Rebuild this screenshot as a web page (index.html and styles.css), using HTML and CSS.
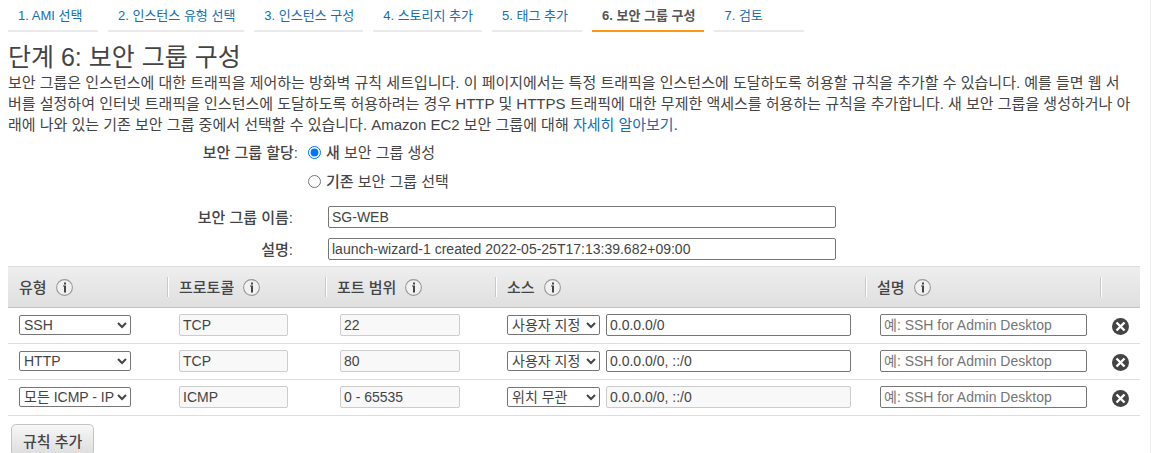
FILE: index.html
```html
<!DOCTYPE html>
<html lang="ko">
<head>
  <meta charset="UTF-8">
  <meta name="viewport" content="width=device-width, initial-scale=1.0">
  <title>단계 6: 보안 그룹 구성</title>
  <link rel="stylesheet" href="styles.css">
</head>
<body>
  <!-- Shared icons -->
  <svg class="sprite" aria-hidden="true">
    <symbol id="icon-info" viewBox="0 0 17 17">
      <circle cx="8.5" cy="8.5" r="7.9" fill="#f1f1f1" stroke="#999" stroke-width="1.1"/>
      <path d="M7 6.5h3v7H8v-6H7zM8 3.5h2v2H8z" fill="#444"/>
    </symbol>
    <symbol id="icon-remove" viewBox="0 0 17 17">
      <circle cx="8.5" cy="8.5" r="8.5" fill="#444"/>
      <path d="M4.5 4.5l8 8M12.5 4.5l-8 8" stroke="#fff" stroke-width="2.4"/>
    </symbol>
  </svg>

  <div class="wizard">
    <nav class="steps">
      <a href="#" class="step">1. AMI 선택</a>
      <a href="#" class="step">2. 인스턴스 유형 선택</a>
      <a href="#" class="step">3. 인스턴스 구성</a>
      <a href="#" class="step">4. 스토리지 추가</a>
      <a href="#" class="step">5. 태그 추가</a>
      <a href="#" class="step active">6. 보안 그룹 구성</a>
      <a href="#" class="step">7. 검토</a>
    </nav>

    <h1>단계 6: 보안 그룹 구성</h1>
    <p class="intro">보안 그룹은 인스턴스에 대한 트래픽을 제어하는 방화벽 규칙 세트입니다. 이 페이지에서는 특정 트래픽을 인스턴스에 도달하도록 허용할 규칙을 추가할 수 있습니다. 예를 들면 웹 서<br>버를 설정하여 인터넷 트래픽을 인스턴스에 도달하도록 허용하려는 경우 HTTP 및 HTTPS 트래픽에 대한 무제한 액세스를 허용하는 규칙을 추가합니다. 새 보안 그룹을 생성하거나 아<br>래에 나와 있는 기존 보안 그룹 중에서 선택할 수 있습니다. Amazon EC2 보안 그룹에 대해 <a href="#">자세히 알아보기</a>.</p>

    <!-- Security group details -->
    <div class="assign" role="radiogroup" aria-labelledby="assign-label">
      <span class="assign-label" id="assign-label">보안 그룹 할당:</span>
      <div class="choices">
        <label class="choice"><input type="radio" name="assign" checked><span><b>새</b> 보안 그룹 생성</span></label>
        <label class="choice"><input type="radio" name="assign"><span><b>기존</b> 보안 그룹 선택</span></label>
      </div>
    </div>
    <div class="field">
      <label for="group-name">보안 그룹 이름:</label>
      <input type="text" id="group-name" value="SG-WEB">
    </div>
    <div class="field">
      <label for="group-desc">설명:</label>
      <input type="text" id="group-desc" value="launch-wizard-1 created 2022-05-25T17:13:39.682+09:00">
    </div>

    <!-- Rules -->
    <table class="rules">
      <thead>
        <tr>
          <th class="col-type"><div class="head">유형 <svg class="icon"><use href="#icon-info"/></svg></div></th>
          <th class="col-protocol"><div class="head">프로토콜 <svg class="icon"><use href="#icon-info"/></svg></div></th>
          <th class="col-port"><div class="head">포트 범위 <svg class="icon"><use href="#icon-info"/></svg></div></th>
          <th class="col-source"><div class="head">소스 <svg class="icon"><use href="#icon-info"/></svg></div></th>
          <th class="col-desc"><div class="head">설명 <svg class="icon"><use href="#icon-info"/></svg></div></th>
          <th class="col-remove"><div class="head"></div></th>
        </tr>
      </thead>
      <tbody>
        <tr>
          <td><select class="type" aria-label="유형"><option>SSH</option></select></td>
          <td><input type="text" class="protocol" aria-label="프로토콜" value="TCP" disabled></td>
          <td class="inset"><input type="text" class="port" aria-label="포트 범위" value="22" disabled></td>
          <td><div class="source"><select aria-label="소스"><option>사용자 지정</option></select><input type="text" aria-label="소스 주소" value="0.0.0.0/0"></div></td>
          <td class="inset"><input type="text" class="desc" aria-label="설명" placeholder="예: SSH for Admin Desktop"></td>
          <td><button type="button" class="remove" aria-label="삭제"><svg class="icon"><use href="#icon-remove"/></svg></button></td>
        </tr>
        <tr>
          <td><select class="type" aria-label="유형"><option>HTTP</option></select></td>
          <td><input type="text" class="protocol" aria-label="프로토콜" value="TCP" disabled></td>
          <td class="inset"><input type="text" class="port" aria-label="포트 범위" value="80" disabled></td>
          <td><div class="source"><select aria-label="소스"><option>사용자 지정</option></select><input type="text" aria-label="소스 주소" value="0.0.0.0/0, ::/0"></div></td>
          <td class="inset"><input type="text" class="desc" aria-label="설명" placeholder="예: SSH for Admin Desktop"></td>
          <td><button type="button" class="remove" aria-label="삭제"><svg class="icon"><use href="#icon-remove"/></svg></button></td>
        </tr>
        <tr>
          <td><select class="type" aria-label="유형"><option>모든 ICMP - IPv4</option></select></td>
          <td><input type="text" class="protocol" aria-label="프로토콜" value="ICMP" disabled></td>
          <td class="inset"><input type="text" class="port" aria-label="포트 범위" value="0 - 65535" disabled></td>
          <td><div class="source"><select aria-label="소스"><option>위치 무관</option></select><input type="text" aria-label="소스 주소" value="0.0.0.0/0, ::/0" disabled></div></td>
          <td class="inset"><input type="text" class="desc" aria-label="설명" placeholder="예: SSH for Admin Desktop"></td>
          <td><button type="button" class="remove" aria-label="삭제"><svg class="icon"><use href="#icon-remove"/></svg></button></td>
        </tr>
      </tbody>
    </table>

    <button type="button" class="add-rule">규칙 추가</button>
  </div>
</body>
</html>
```
FILE: styles.css
```css
:root {
  --fg: #444;
  --link: #146eb4;
  --accent: #ff9914;
  --line: #ddd;
  --field: #767676;
  --strong: 500;
}
* { box-sizing: border-box; }
body {
  margin: 0;
  height: 100vh;
  overflow: hidden;
  background: #fff;
  color: var(--fg);
  font-family: "Liberation Sans", "Noto Sans CJK KR", sans-serif;
  font-size: 15px;
  line-height: 21px;
}
a {
  color: var(--link);
  text-decoration: none;
}
b { font-weight: var(--strong); }
.sprite { display: none; }
.icon {
  display: block;
  width: 17px;
  height: 17px;
}
.wizard {
  min-height: 100%;
  padding: 0 10px 0 8px;
  border-right: 1px solid #eee;
}
.steps {
  display: flex;
  gap: 10px;
  height: 32px;
}
.step {
  min-width: 90px;
  padding: 5px 9px 0 10px;
  border-bottom: 2px solid #eaeaea;
  font-size: 13px;
  white-space: nowrap;
}
.step.active {
  border-color: var(--accent);
  color: #555;
  font-weight: bold;
}
h1 {
  margin: 10px 0 0;
  font-size: 25px;
  font-weight: normal;
  line-height: 30px;
}
.intro {
  margin: 0;
}

/* Form */
.assign {
  display: flex;
  gap: 10px;
  margin-top: 7px;
}
.assign-label {
  width: 290px;
  text-align: right;
  font-weight: var(--strong);
}
.choices {
  display: flex;
  flex-direction: column;
  gap: 8px;
}
.choice {
  display: flex;
  align-items: center;
  gap: 5px;
}
.choice input {
  width: 13px;
  height: 13px;
  margin: 0;
}
.field {
  display: flex;
  align-items: center;
  gap: 35px;
  margin-top: 10px;
}
.field label {
  width: 285px;
  text-align: right;
  font-weight: var(--strong);
}
.field input { width: 508px; }
.assign + .field { margin-top: 14px; }
input[type="text"],
select {
  border: 1px solid var(--field);
  border-radius: 2px;
  background: #fff;
  color: var(--fg);
  font-family: inherit;
  font-size: 14px;
}
input[type="text"] {
  height: 22px;
  padding: 0 3px;
}
input[type="text"]:disabled {
  border-color: #ccc;
  background: #f8f8f8;
}
input::placeholder { color: #757575; }
select {
  height: 20px;
  padding: 0;
}

/* Rules table */
.rules {
  width: 100%;
  margin-top: 6px;
  border-collapse: collapse;
  table-layout: fixed;
}
.rules thead {
  background: linear-gradient(#eee, #dfdfdf);
}
.rules th {
  height: 41px;
  padding: 0;
  border-top: 1px solid #ddd;
  border-bottom: 1px solid #c4c4c4;
  font-weight: var(--strong);
}
.rules td {
  height: 36px;
  padding: 0 0 2px 12px;
  border-bottom: 1px solid var(--line);
}
.rules td:first-child { padding-left: 11px; }
.rules td.inset { padding-left: 15px; }
.rules td > * { display: block; }
.head {
  display: flex;
  align-items: center;
  gap: 9px;
  height: 20px;
  padding-left: 11px;
  border-left: 1px solid #c8c8c8;
  box-shadow: inset 1px 0 #fff;
}
.col-type .head {
  border-left: 0;
  box-shadow: none;
}
.col-type { width: 159px; }
.col-protocol { width: 158px; }
.col-port { width: 170px; }
.col-desc { width: 235px; }
.col-remove { width: 40px; }
.type { width: 112px; }
.protocol { width: 109px; }
.port { width: 120px; }
.desc { width: 207px; }
.rules .source {
  display: flex;
  align-items: center;
  gap: 6px;
  padding-right: 14px;
}
.source select { width: 93px; }
.source input {
  flex: 1;
  min-width: 0;
}
.remove {
  padding: 4px 0 0;
  border: 0;
  background: none;
  cursor: pointer;
}
.add-rule {
  height: 32px;
  margin: 8px 0 0 3px;
  padding: 0 11px;
  border: 1px solid #c4c4c4;
  border-radius: 5px;
  background: linear-gradient(#f7f7f7, #ddd);
  color: var(--fg);
  font-family: inherit;
  font-size: 15px;
  font-weight: var(--strong);
  cursor: pointer;
}
```
